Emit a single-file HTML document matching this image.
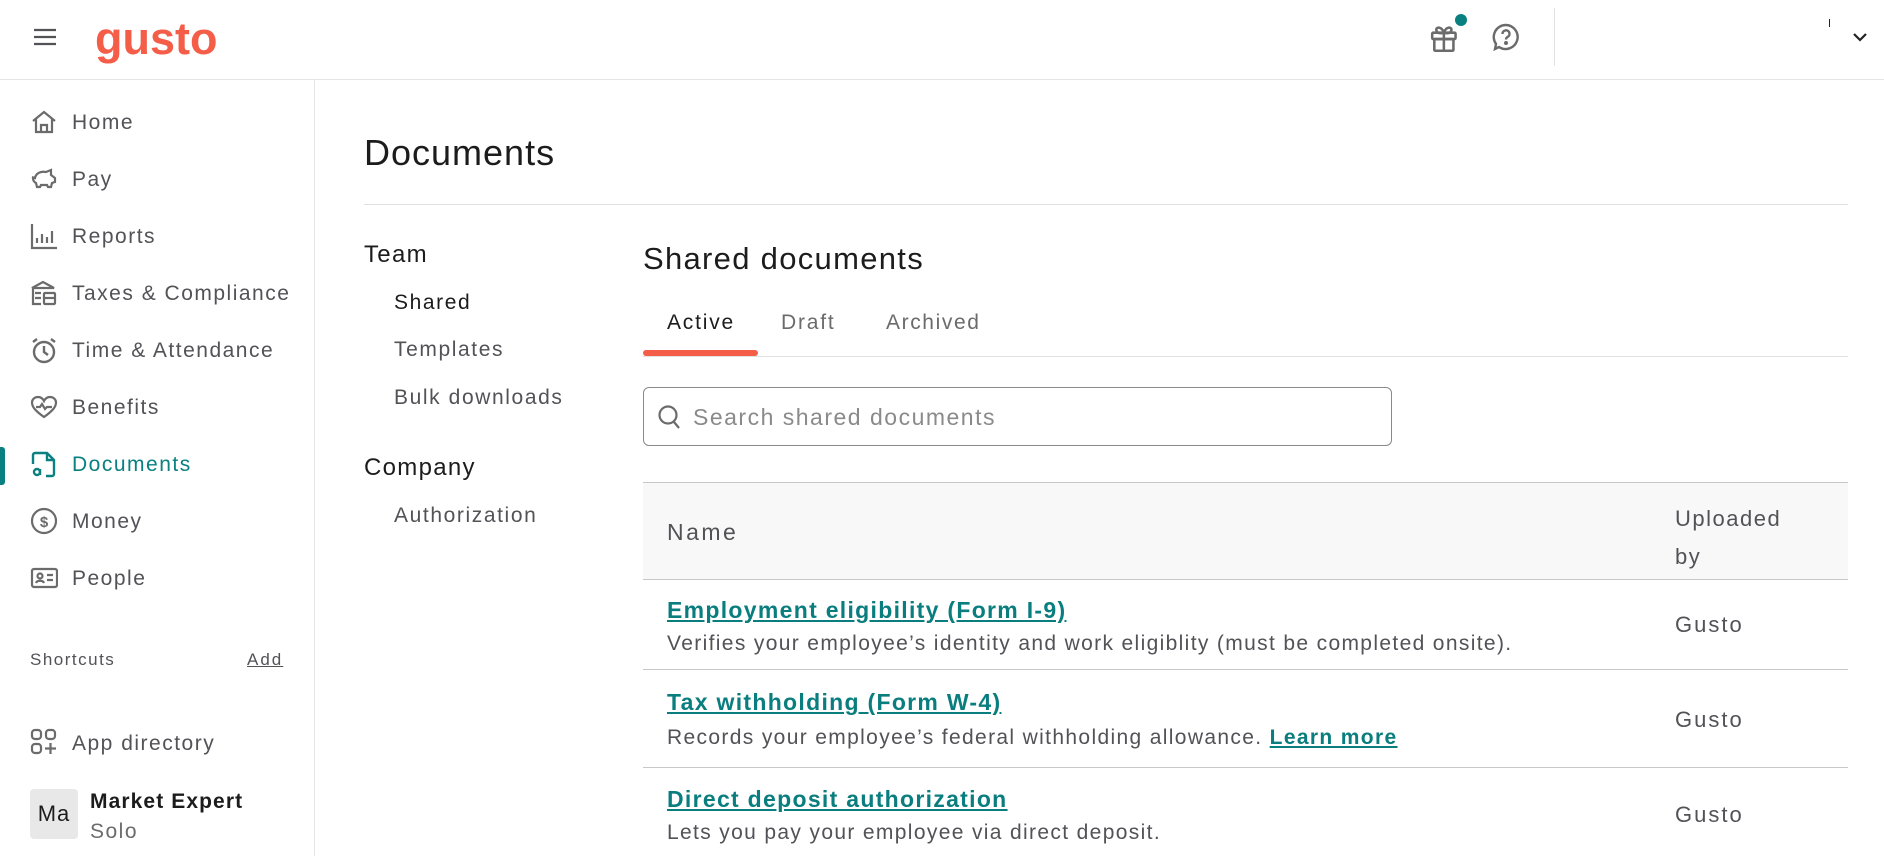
<!DOCTYPE html>
<html><head><meta charset="utf-8"><style>
*{margin:0;padding:0;box-sizing:border-box}
body{width:1884px;height:856px;overflow:hidden;background:#fff;font-family:"Liberation Sans",sans-serif;color:#1c1c1c;position:relative}
.a{position:absolute;white-space:nowrap}
.t{margin-top:3px}
.hdr{position:absolute;left:0;top:0;width:1884px;height:80px;border-bottom:1px solid #e4e4e4;background:#fff}
.side{position:absolute;left:0;top:80px;width:315px;height:776px;border-right:1px solid #e6e6e6}
.nav{font-size:21px;color:#525257;left:72px;letter-spacing:1.5px;margin-top:3px}
.ic{position:absolute;left:30px;width:28px;height:28px}
.sub{font-size:21px;color:#525257;left:394px;letter-spacing:1.6px;margin-top:3px}
.lnk{font-size:23px;font-weight:bold;color:#0a7e7e;text-decoration:underline;left:667px;letter-spacing:1.3px;margin-top:3px}
.desc{font-size:21px;color:#525257;left:667px;letter-spacing:1.35px;margin-top:3px}
.g{font-size:22px;color:#525257;left:1675px;letter-spacing:2px;margin-top:3px}
.hl{position:absolute;left:643px;width:1205px;height:1px;background:#c8c8c8}
</style></head><body>
<div class="hdr"></div>
<svg class="a" style="left:33px;top:28px" width="24" height="18"><path d="M1 2h22M1 9h22M1 16h22" stroke="#525257" stroke-width="2.2"/></svg>
<div class="a" style="left:95px;top:13px;font-size:45px;font-weight:bold;color:#f45d48;letter-spacing:0px">gusto</div>
<svg class="a" style="left:1429px;top:21px" width="34" height="34" viewBox="0 0 32 32" fill="none" stroke="#6b6b6b" stroke-width="2.4"><rect x="3" y="11" width="22" height="6" rx="1"/><rect x="5" y="17" width="18" height="11" rx="1"/><path d="M14 11v17M14 11c-2-6-8-6-7-2s7 2 7 2c2-6 8-6 7-2s-7 2-7 2"/></svg>
<div class="a" style="left:1455px;top:14px;width:12px;height:12px;border-radius:50%;background:#0a8080"></div>
<svg class="a" style="left:1492px;top:23px" width="28" height="28" viewBox="0 0 28 28" fill="none" stroke="#6b6b6b" stroke-width="2.4"><path d="M14 2a12 12 0 1 1-7 22l-4 2 1-5A12 12 0 0 1 14 2z"/><path d="M10.5 11a3.5 3.5 0 1 1 5 3c-1 .6-1.5 1.2-1.5 2.5" /><circle cx="14" cy="20" r="0.8" fill="#6b6b6b"/></svg>
<div class="a" style="left:1554px;top:8px;width:1px;height:58px;background:#e2e2e2"></div>
<div class="a" style="left:1829px;top:19px;width:1px;height:8px;background:#222"></div>
<svg class="a" style="left:1852px;top:31px" width="16" height="12"><path d="M2 3l6 6 6-6" stroke="#222" stroke-width="2.2" fill="none"/></svg>

<div class="side"></div>
<div class="a" style="left:0;top:447px;width:5px;height:38px;background:#0a8080;border-radius:0 3px 3px 0"></div>
<svg class="ic" style="top:108px" viewBox="0 0 28 28" fill="none" stroke="#6b6b6b" stroke-width="2.2"><path d="M3 13L14 4l11 9M6 11v13h16V11M11 24v-7h6v7"/></svg>
<div class="a nav" style="top:108px">Home</div>
<svg class="ic" style="top:165px" viewBox="0 0 28 28" fill="none" stroke="#6b6b6b" stroke-width="2.2"><path d="M2 12l3 1c1-5 6-7 11-6l5-2v5l4 3v4l-3 1-1 4h-3l-1-2h-6l-1 2H7l-1-4c-2-1-3-3-3-5"/></svg>
<div class="a nav" style="top:165px">Pay</div>
<svg class="ic" style="top:222px" viewBox="0 0 28 28" fill="none" stroke="#6b6b6b" stroke-width="2.2"><path d="M2 2v24h25M7 21v-5M12 21v-9M17 21v-6M22 21V9"/></svg>
<div class="a nav" style="top:222px">Reports</div>
<svg class="ic" style="top:279px" viewBox="0 0 28 28" fill="none" stroke="#6b6b6b" stroke-width="2.2"><path d="M2 9l11-6 11 6zM3 9v16h8M5 14h6M5 19h6"/><rect x="14" y="14" width="11" height="11" rx="1"/><path d="M14 19h11"/></svg>
<div class="a nav" style="top:279px">Taxes &amp; Compliance</div>
<svg class="ic" style="top:336px" viewBox="0 0 28 28" fill="none" stroke="#6b6b6b" stroke-width="2.4"><circle cx="14" cy="16" r="10"/><path d="M14 10v6l4 3M3 6l4-3M25 6l-4-3"/></svg>
<div class="a nav" style="top:336px">Time &amp; Attendance</div>
<svg class="ic" style="top:393px" viewBox="0 0 28 28" fill="none" stroke="#6b6b6b" stroke-width="2.2"><path d="M14 24C4 17 2 13 2 9.5 2 6 5 4 8 4c3 0 5 2 6 4 1-2 3-4 6-4 3 0 6 2 6 5.5 0 3.5-2 7.5-12 14.5z"/><path d="M6 14h4l2-3 3 5 2-2h5"/></svg>
<div class="a nav" style="top:393px">Benefits</div>
<svg class="ic" style="top:450px" viewBox="0 0 28 28" fill="none" stroke="#0a8080" stroke-width="2.4"><path d="M3 14V5a2 2 0 0 1 2-2h12l7 7v14a2 2 0 0 1-2 2h-6M17 3v7h7"/><circle cx="7" cy="22" r="3"/><path d="M10 19v6"/></svg>
<div class="a nav" style="top:450px;color:#0a8080">Documents</div>
<svg class="ic" style="top:507px" viewBox="0 0 28 28" fill="none" stroke="#6b6b6b" stroke-width="2.2"><circle cx="14" cy="14" r="12"/><text x="14" y="20" font-size="15" font-weight="bold" text-anchor="middle" fill="#6b6b6b" stroke="none" font-family="Liberation Sans">$</text></svg>
<div class="a nav" style="top:507px">Money</div>
<svg class="ic" style="top:564px" viewBox="0 0 28 28" fill="none" stroke="#6b6b6b" stroke-width="2.2"><rect x="2" y="5" width="25" height="18" rx="2"/><circle cx="10" cy="12" r="2.5"/><path d="M6 19c1-3 7-3 8 0M17 11h6M17 16h6"/></svg>
<div class="a nav" style="top:564px">People</div>
<div class="a t" style="left:30px;top:647px;font-size:17px;color:#525257;letter-spacing:1.5px">Shortcuts</div>
<div class="a t" style="left:247px;top:647px;font-size:17px;color:#525257;text-decoration:underline;letter-spacing:2px">Add</div>
<svg class="ic" style="top:728px" viewBox="0 0 28 28" fill="none" stroke="#6b6b6b" stroke-width="2.2"><rect x="2" y="2" width="9" height="9" rx="3"/><rect x="16" y="2" width="9" height="9" rx="3"/><rect x="2" y="16" width="9" height="9" rx="3"/><path d="M20.5 15v11M15 20.5h11"/></svg>
<div class="a nav" style="top:729px">App directory</div>
<div class="a" style="left:30px;top:789px;width:48px;height:50px;background:#e8e8e8;border-radius:4px;font-size:22px;line-height:50px;text-align:center;color:#1c1c1c;letter-spacing:1px">Ma</div>
<div class="a t" style="left:90px;top:787px;font-size:21px;font-weight:bold;color:#1c1c1c;letter-spacing:1.1px">Market Expert</div>
<div class="a t" style="left:90px;top:817px;font-size:21px;color:#6b6b6b;letter-spacing:1.5px">Solo</div>

<div class="a t" style="left:364px;top:129px;font-size:36px;font-weight:500;color:#1c1c1c;letter-spacing:1px">Documents</div>
<div class="a" style="left:364px;top:204px;width:1484px;height:1px;background:#e0e0e0"></div>
<div class="a t" style="left:364px;top:238px;font-size:24px;color:#1c1c1c;letter-spacing:1.3px">Team</div>
<div class="a sub" style="top:288px;color:#1c1c1c">Shared</div>
<div class="a sub" style="top:335px">Templates</div>
<div class="a sub" style="top:383px">Bulk downloads</div>
<div class="a t" style="left:364px;top:451px;font-size:24px;color:#1c1c1c;letter-spacing:1.3px">Company</div>
<div class="a sub" style="top:501px">Authorization</div>

<div class="a t" style="left:643px;top:238px;font-size:31px;color:#1c1c1c;letter-spacing:1.3px">Shared documents</div>
<div class="a t" style="left:667px;top:308px;font-size:21px;color:#1c1c1c;letter-spacing:1.8px">Active</div>
<div class="a t" style="left:781px;top:308px;font-size:21px;color:#6b6b6b;letter-spacing:1.8px">Draft</div>
<div class="a t" style="left:886px;top:308px;font-size:21px;color:#6b6b6b;letter-spacing:1.6px">Archived</div>
<div class="a" style="left:643px;top:356px;width:1205px;height:1px;background:#e2e2e2"></div>
<div class="a" style="left:643px;top:350px;width:115px;height:6px;background:#f45d48;border-radius:3px"></div>
<div class="a" style="left:643px;top:387px;width:749px;height:59px;border:1px solid #8a8a8a;border-radius:6px"></div>
<svg class="a" style="left:657px;top:403px" width="26" height="28" viewBox="0 0 26 28" fill="none" stroke="#6b6b6b" stroke-width="2.2"><circle cx="11" cy="12" r="8.5"/><path d="M17 19l5 6"/></svg>
<div class="a t" style="left:693px;top:401px;font-size:23px;color:#8a8a8a;letter-spacing:1.5px">Search shared documents</div>

<div class="hl" style="top:482px"></div>
<div class="a" style="left:643px;top:483px;width:1205px;height:96px;background:#f8f8f8"></div>
<div class="hl" style="top:579px"></div>
<div class="a t" style="left:667px;top:516px;font-size:23px;color:#525257;letter-spacing:2.5px">Name</div>
<div class="a t" style="left:1675px;top:497px;font-size:22px;color:#525257;line-height:38px;letter-spacing:1.5px">Uploaded<br>by</div>

<div class="a lnk" style="top:594px">Employment eligibility (Form I-9)</div>
<div class="a desc" style="top:629px">Verifies your employee’s identity and work eligiblity (must be completed onsite).</div>
<div class="a g" style="top:609px">Gusto</div>
<div class="hl" style="top:669px"></div>
<div class="a lnk" style="top:686px">Tax withholding (Form W-4)</div>
<div class="a desc" style="top:723px">Records your employee’s federal withholding allowance. <span style="color:#0a7e7e;font-weight:bold;text-decoration:underline">Learn more</span></div>
<div class="a g" style="top:704px">Gusto</div>
<div class="hl" style="top:767px"></div>
<div class="a lnk" style="top:783px">Direct deposit authorization</div>
<div class="a desc" style="top:818px">Lets you pay your employee via direct deposit.</div>
<div class="a g" style="top:799px">Gusto</div>
</body></html>
